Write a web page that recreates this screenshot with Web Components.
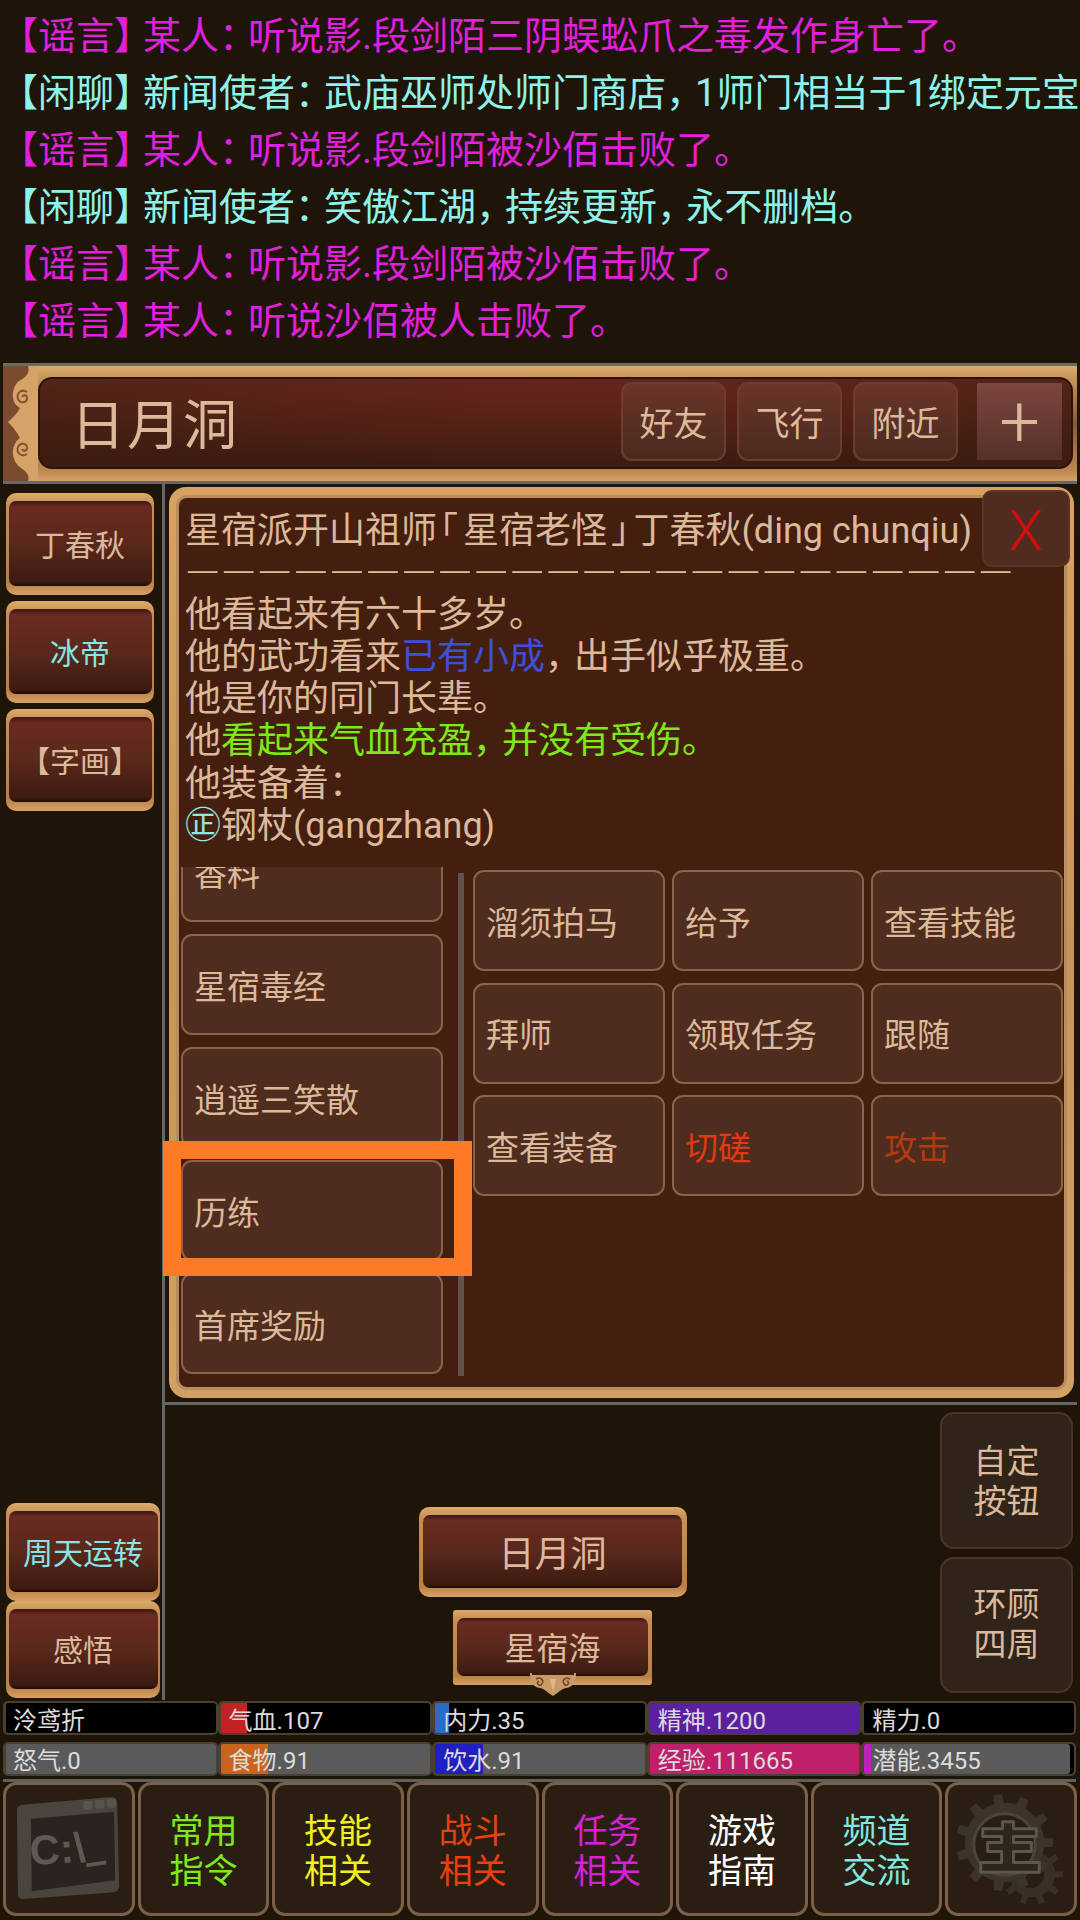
<!DOCTYPE html>
<html lang="zh">
<head>
<meta charset="utf-8">
<title>日月洞</title>
<style>
  html, body {margin: 0; padding: 0; background: #1e1408;}
  body {
    width: 1080px; height: 1920px; overflow: hidden; position: relative;
    font-family: Roboto, "Noto Sans CJK SC", sans-serif; color: #dcb99b;
  }
</style>
</head>
<body>
<game-app></game-app>

<script>
const BASE = ':host {box-sizing: border-box;} *, *::before, *::after {box-sizing: border-box;}'

// small helper: every element below is just css + markup in an open shadow root
function el(name, css, html) {
  customElements.define(name, class extends HTMLElement {
    connectedCallback() {
      if(this.shadowRoot) return
      const root = this.attachShadow({mode: 'open'})
      root.innerHTML = `<style>${BASE}${css}</style>${typeof html === 'function' ? html(this) : html}`
    }
  })
}

el('chat-line', `
  :host {display: block; height: 57px; line-height: 57px; font-size: 38px; white-space: nowrap;}
  :host([kind=rumor]) {color: #e11fdc;}
  :host([kind=idle]) {color: #8ff2ea;}
  ::slotted(.t) {letter-spacing: -9px;}
`, '<slot></slot>')

el('game-chat', `
  :host {display: block; height: 363px; padding-top: 7.5px; overflow: hidden;}
`, '<slot></slot>')

el('soft-button', `
  :host {
    display: flex; align-items: center; height: var(--h, 101px);
    padding-left: 11px; font-size: 33px; color: var(--c, #dcb99b);
    background: #4e2c1e; border: 2.5px solid #8a634c; border-radius: 11px;
  }
`, '<slot></slot>')

el('top-button', `
  :host {
    display: flex; align-items: center; justify-content: center;
    width: 105px; height: 79px; font-size: 34px; color: #dcb99b;
    background: linear-gradient(#6c342a, #4a2a1e); border: 2px solid #6c3c2c; border-radius: 11px;
  }
`, '<slot></slot>')

el('gold-button', `
  :host {
    display: flex; position: relative; flex: none;
    width: var(--w); height: var(--h);
    padding: 8px var(--side, 2.5px) 9px;
    border-radius: var(--r, 10px);
    background: linear-gradient(#dcab6b 0, #c68f54 12%, #b97f45 88%, #d7a265 100%);
    font-size: var(--fs, 30px); color: var(--c, #dcb99b);
  }
  .in {
    flex: 1; display: flex; align-items: center; justify-content: center; border-radius: 7px;
    padding-bottom: 2px;
    background: linear-gradient(#3a170e 0, #6a2a21 7%, #5a281c 50%, #3d1b11 95%, #1c0a05 100%);
  }
`, '<div class="in"><slot></slot></div>')

el('title-bar', `
  :host {
    display: flex; margin: 0 3px; height: 121px;
    border-top: 3px solid #6b6b60; border-bottom: 3px solid #686868;
    background: linear-gradient(#dcab6b 0, #c9955a 10%, #8a5a36 50%, #bb8550 90%, #d6a266 100%);
  }
  svg {flex: none; width: 35px; height: 115px; display: block;}
  .in {
    flex: 1; display: flex; align-items: center; margin: 11px 4px 12px 0; padding: 0 11px 4px 33px;
    border-radius: 14px; box-shadow: inset 0 0 0 2px #2b130a;
    background: radial-gradient(ellipse 60% 95% at 50% 0, rgba(112,36,28,.75), transparent), linear-gradient(#4f2418, #3c1b10);
  }
  .name {flex: 1; font-size: 54px; color: #dcb99b; letter-spacing: 2px;}
  .btns {display: flex; gap: 11px; margin-right: 19px;}
  .plus {
    display: flex; align-items: center; justify-content: center; width: 85px; height: 77px;
    font-size: 72px; font-weight: 300; color: #dcb99b; background: linear-gradient(#7c4640, #553128);
  }
`, `
  <svg viewBox="0 0 35 115">
    <rect width="35" height="115" fill="#7b4b2f"/>
    <path d="M35 0 H25 C27 6 24 10 18 14 C12 16 9 26 10 32 C11 38 14 40 17 42 C14 48 9 52 5 56 C9 60 14 66 17 72 C14 74 11 78 10 84 C9 90 12 98 18 102 C24 106 27 110 25 115 H35Z" fill="#d5a367"/>
    <path d="M24 26 C18 22 13 28 15 33 C17 38 24 37 24 32 C24 29 20 28 19 31 M24 88 C18 92 13 86 15 81 C17 76 24 77 24 82 C24 85 20 86 19 83" fill="none" stroke="#83522e" stroke-width="2"/>
  </svg>
  <div class="in">
    <div class="name"><slot name="name"></slot></div>
    <div class="btns"><slot name="btn"></slot></div>
    <div class="plus">+</div>
  </div>
`)

el('look-panel', `
  :host {
    display: flex; flex-direction: column; position: relative; height: 911px; margin: 3px 6px 4px 4px;
    padding: 11px 10px; border-radius: 17px;
    background: linear-gradient(#d9a262, #c8935a 50%, #d3a065);
  }
  .body {
    flex: 1; display: flex; flex-direction: column; border-radius: 8px; background: #441f10; min-height: 0;
    box-shadow: 0 0 0 3px #b98c5e;
  }
  .desc {
    height: 369px; padding: 12px 0 0 6px; overflow: hidden;
    font-size: 36px; white-space: nowrap; color: #dcb99b;
  }
  .close {
    position: absolute; top: 3px; right: 4px; width: 88px; height: 77px; padding-top: 5px;
    display: flex; align-items: center; justify-content: center;
    background: #4f2c1f; border: 2px solid #5a3526; border-radius: 10px;
    font-size: 56px; font-weight: 300; color: #d80c0c;
  }
  .acts {flex: 1; display: flex; min-height: 0;}
`, `
  <div class="body">
    <div class="desc"><slot name="desc"></slot></div>
    <div class="acts"><slot name="acts"></slot></div>
  </div>
  <div class="close">X</div>
`)

el('desc-line', `
  :host {display: block; height: 42.1px; line-height: 42.1px;}
  ::slotted(.t) {letter-spacing: -7px;}
  ::slotted(.b) {color: #3d50dc;}
  ::slotted(.g) {color: #7fe81a;}
  ::slotted(.o) {color: #8fe8e0;}
  ::slotted(.lb) {margin-left: 3px; letter-spacing: 5px;}
  ::slotted(.rb) {margin-left: 4px; letter-spacing: 4.5px;}
  ::slotted(.dash) {
    display: inline-block; letter-spacing: .7px; font-weight: 300;
    transform: scaleX(1.266); transform-origin: 0 50%;
  }
`, '<slot></slot>')

el('action-area', `
  :host {display: flex; flex: 1; height: 100%; min-width: 0;}
  .list {flex: none; width: 262px; margin-left: 2px; overflow: hidden;}
  .stack {display: flex; flex-direction: column; gap: 12px; margin-top: -46px;}
  .rule {flex: none; width: 6px; margin: 6px 9px 11px 15px; background: #66524c;}
  .grid {
    flex: 1; display: grid; grid-template-columns: repeat(3, 1fr); gap: 11.5px 7px;
    align-content: start; padding-top: 3px; margin-right: 1px; min-width: 0;
  }
`, `
  <div class="list"><div class="stack"><slot name="list"></slot></div></div>
  <div class="rule"></div>
  <div class="grid"><slot name="grid"></slot></div>
`)

el('side-column', `
  :host {display: flex; flex-direction: column; flex: none; width: 165px; padding: 9px 0 2px 6px; border-right: 3px solid #666;}
  .top {display: flex; flex-direction: column; gap: 6px;}
  .bottom {display: flex; flex-direction: column; margin-top: auto;}
`, `
  <div class="top"><slot name="top"></slot></div>
  <div class="bottom"><slot name="bottom"></slot></div>
`)

el('room-area', `
  :host {display: flex; height: 295px;}
  .map {flex: 1; display: flex; flex-direction: column; align-items: center; gap: 13px; padding-top: 102px;}
  .cmds {flex: none; width: 133px; margin-right: 7px; padding-top: 7px; display: flex; flex-direction: column; gap: 8px;}
`, `
  <div class="map"><slot name="map"></slot></div>
  <div class="cmds"><slot name="cmd"></slot></div>
`)

el('cmd-button', `
  :host {
    display: flex; align-items: center; justify-content: center; text-align: center;
    height: 136.5px; font-size: 33px; line-height: 40px; color: #dcb99b; padding-top: var(--pt, 0);
    background: #30241a; border: 2.5px solid #4c3422; border-radius: 14px;
  }
`, '<slot></slot>')

el('exit-knob', `
  :host {position: absolute; left: 50%; bottom: -11px; width: 46px; height: 23px; margin-left: -23px; display: block;}
  svg {display: block;}
`, `
  <svg width="46" height="23" viewBox="0 0 46 23">
    <path d="M0 0 H46 C46 8 44 14 36 15 C31 16 28 20 23 23 C18 20 15 16 10 15 C2 14 0 8 0 0Z" fill="#c99a68"/>
    <rect x="2" width="42" height="2" fill="#3a1c10"/>
    <path d="M6 6 c5 -3 9 2 5 6 c-3 1 -5 -3 -2 -4 M40 6 c-5 -3 -9 2 -5 6 c3 1 5 -3 2 -4" fill="none" stroke="#6e4526" stroke-width="1.6"/>
    <path d="M20 6 L23 19 L26 6" fill="#e2b880"/>
  </svg>
`)

el('stat-bar', `
  :host {
    display: flex; align-items: center; height: 34px; padding-left: var(--pad, 8px);
    font-size: 24px; color: #dcdcdc; white-space: nowrap;
    background-color: var(--bg, #000); background-repeat: no-repeat;
    background-image: linear-gradient(var(--fc, transparent), var(--fc, transparent));
    background-size: var(--fw, 0) 100%;
    border: 2px solid #4a3f30; border-width: 2px 2px 2px 3px; border-radius: 5px;
    box-shadow: inset var(--end, 0) 0 0 0 #000;
  }
`, '<slot></slot>')

el('stat-panel', `
  :host {
    display: grid; grid-template-columns: repeat(5, 1fr); gap: 6px 0;
    margin: 1px 4px 0 3px; padding-bottom: 3px; height: 81px;
    border-bottom: 3px solid #5f5f5f;
  }
`, '<slot></slot>')

el('nav-button', `
  :host {
    display: flex; align-items: center; justify-content: center; text-align: center;
    height: 134px; font-size: 34px; line-height: 39.5px; color: var(--c, #fff); padding-top: var(--pt, 5px);
    background: #2a1e12; border: 3px solid #7d5f48; border-radius: 13px; overflow: hidden;
  }
`, '<slot></slot>')

el('term-icon', `
  :host {display: block; width: 125px; height: 125px;}
  svg {display: block; filter: blur(.5px);}
  text {font-family: "Liberation Sans", sans-serif; font-weight: 700; font-size: 42px; fill: #5e5852;}
`, `
  <svg width="125" height="125" viewBox="2 2 126 126">
    <path d="M18 20 L108 12 Q114 12 114 18 L116 102 Q116 107 111 108 L20 115 Q14 115 14 110 L13 26 Q13 21 18 20Z" fill="#4a443e"/>
    <path d="M27 34 L111 27 L112 96 L28 107Z" fill="#2a2320"/>
    <rect x="80" y="16" width="9" height="9" rx="2" fill="#5a544e"/>
    <rect x="92" y="15" width="9" height="9" rx="2" fill="#5a544e"/>
    <rect x="104" y="14" width="9" height="9" rx="2" fill="#5a544e"/>
    <text x="27" y="81" transform="rotate(-4 27 81)">C:\\</text>
    <path d="M83 81 L103 78" stroke="#5e5852" stroke-width="4"/>
  </svg>
`)

function gearPath(cx, cy, r1, r2, n) {
  let d = ''
  for(let i = 0; i < n; i++) {
    const a = i / n * Math.PI * 2, s = Math.PI / n
    const pts = [[r1, a - s * .95], [r1, a - s * .45], [r2, a - s * .3], [r2, a + s * .3], [r1, a + s * .45]]
    pts.forEach(([r, t], k) => {
      d += `${i === 0 && k === 0 ? 'M' : 'L'}${(cx + r * Math.cos(t)).toFixed(1)} ${(cy + r * Math.sin(t)).toFixed(1)}`
    })
  }
  return d + 'Z'
}

el('gear-icon', `
  :host {display: block; width: 125px; height: 125px;}
  svg {display: block; filter: blur(.6px);}
`, () => `
  <svg width="125" height="125" viewBox="2 2 126 126">
    <path d="${gearPath(86, 90, 23, 31, 10)}" fill="#392f26"/>
    <circle cx="84" cy="90" r="14" fill="#2a1e12"/>
    <path d="${gearPath(58, 58, 40, 49, 11)}" fill="#3c332a"/>
    <circle cx="58" cy="60" r="31" fill="#2a1e12" stroke="#4c443b" stroke-width="3"/>
    <path d="M56 37 H67 V44 H90 V52 H67 V58 H85 V67 H67 V78 H93 V88 H34 V78 H55 V67 H41 V58 H55 V52 H36 V44 H56Z" fill="#2c2620" stroke="#5e574e" stroke-width="3" stroke-linejoin="round"/>
  </svg>
`)

el('nav-bar', `
  :host {display: grid; grid-template-columns: repeat(8, 1fr); gap: 3px; margin: 0 3px 0 3px;}
`, '<slot></slot>')

el('focus-ring', `
  :host {position: absolute; left: 163px; top: 1141px; width: 309px; height: 135px; border: 18px solid #ff7a26; display: block;}
`, '')

el('rule-line', `:host {display: block; height: 3px; margin-right: 3px; background: #666;}`, '')

el('main-row', `
  :host {display: flex; height: 1216px;}
  .right {flex: 1; min-width: 0; display: flex; flex-direction: column;}
`, `
  <slot name="side"></slot>
  <div class="right">
    <slot name="panel"></slot>
    <slot name="rule"></slot>
    <slot name="room"></slot>
  </div>
`)

el('game-app', `:host {display: block; width: 1080px; height: 1920px;}`, '<slot></slot>')

// the page itself, all content is passed in through slots
const chat = (kind, tag, rest) => `<chat-line kind="${kind}">【${tag}<span class="t">】</span>${rest}</chat-line>`
const soft = (slot, txt, c) => `<soft-button slot="${slot}"${c ? ` style="--c:${c}"` : ''}>${txt}</soft-button>`
const stat = (txt, style) => `<stat-bar style="${style || ''}">${txt}</stat-bar>`
const nav = (txt, c) => `<nav-button style="--c:${c}">${txt}</nav-button>`
const c = '<span class="t">：</span>', m = '<span class="t">，</span>'

document.querySelector('game-app').innerHTML = `
  <game-chat>
    ${chat('rumor', '谣言', `某人${c}听说影.段剑陌三阴蜈蚣爪之毒发作身亡了。`)}
    ${chat('idle', '闲聊', `新闻使者${c}武庙巫师处师门商店${m}1师门相当于1绑定元宝`)}
    ${chat('rumor', '谣言', `某人${c}听说影.段剑陌被沙佰击败了。`)}
    ${chat('idle', '闲聊', `新闻使者${c}笑傲江湖${m}持续更新${m}永不删档。`)}
    ${chat('rumor', '谣言', `某人${c}听说影.段剑陌被沙佰击败了。`)}
    ${chat('rumor', '谣言', `某人${c}听说沙佰被人击败了。`)}
  </game-chat>

  <title-bar>
    <span slot="name">日月洞</span>
    <top-button slot="btn">好友</top-button>
    <top-button slot="btn">飞行</top-button>
    <top-button slot="btn">附近</top-button>
  </title-bar>

  <main-row>
    <side-column slot="side">
      <gold-button slot="top" style="--w:148px;--h:102px">丁春秋</gold-button>
      <gold-button slot="top" style="--w:148px;--h:102px;--c:#86e6e6">冰帝</gold-button>
      <gold-button slot="top" style="--w:148px;--h:102px">【字画】</gold-button>
      <gold-button slot="bottom" style="--w:154px;--h:98px;--c:#86e6e6">周天运转</gold-button>
      <gold-button slot="bottom" style="--w:154px;--h:97px">感悟</gold-button>
    </side-column>
    <look-panel slot="panel">
      <desc-line slot="desc">星宿派开山祖师<span class="lb">｢</span>星宿老怪<span class="rb">｣</span>丁春秋(ding chunqiu)</desc-line>
      <desc-line slot="desc"><span class="dash">———————————————————————</span></desc-line>
      <desc-line slot="desc">他看起来有六十多岁。</desc-line>
      <desc-line slot="desc">他的武功看来<span class="b">已有小成</span><span class="t">，</span>出手似乎极重。</desc-line>
      <desc-line slot="desc">他是你的同门长辈。</desc-line>
      <desc-line slot="desc">他<span class="g">看起来气血充盈</span><span class="g t">，</span><span class="g">并没有受伤。</span></desc-line>
      <desc-line slot="desc">他装备着：</desc-line>
      <desc-line slot="desc"><span class="o">㊣</span>钢杖(gangzhang)</desc-line>
      <action-area slot="acts">
        ${soft('list', '香料')}${soft('list', '星宿毒经')}${soft('list', '逍遥三笑散')}${soft('list', '历练')}${soft('list', '首席奖励')}
        ${soft('grid', '溜须拍马')}${soft('grid', '给予')}${soft('grid', '查看技能')}
        ${soft('grid', '拜师')}${soft('grid', '领取任务')}${soft('grid', '跟随')}
        ${soft('grid', '查看装备')}${soft('grid', '切磋', '#e03a14')}${soft('grid', '攻击', '#b23c10')}
      </action-area>
    </look-panel>
    <rule-line slot="rule"></rule-line>
    <room-area slot="room">
      <gold-button slot="map" style="--w:268px;--h:90px;--fs:36px;--side:4.5px">日月洞</gold-button>
      <gold-button slot="map" style="--w:199px;--h:75px;--fs:32px;--side:4px;--r:3px">星宿海<exit-knob></exit-knob></gold-button>
      <cmd-button slot="cmd" style="--pt:3px">自定<br>按钮</cmd-button>
      <cmd-button slot="cmd">环顾<br>四周</cmd-button>
    </room-area>
  </main-row>

  <stat-panel>
    ${stat('泠鸢折', '--pad:7px')}${stat('气血.107', '--fc:#c42222;--fw:26px')}${stat('内力.35', '--fc:#2a6cc8;--fw:14px')}${stat('精神.1200', '--bg:#5b20a0')}${stat('精力.0')}
    ${stat('怒气.0', '--bg:#5a5a5a;--pad:7px')}${stat('食物.91', '--bg:#5a5a5a;--fc:#c8641e;--fw:47px')}${stat('饮水.91', '--bg:#5a5a5a;--fc:#2020c0;--fw:48px')}${stat('经验.111665', '--bg:#c0206a')}${stat('潜能.3455', '--bg:#5a5a5a;--fc:#c020c0;--fw:7px;--end:-4px')}
  </stat-panel>

  <nav-bar>
    <nav-button style="--pt:0"><term-icon></term-icon></nav-button>
    ${nav('常用<br>指令', '#7fe81a')}${nav('技能<br>相关', '#f0f020')}${nav('战斗<br>相关', '#e84010')}
    ${nav('任务<br>相关', '#d820d8')}${nav('游戏<br>指南', '#ffffff')}${nav('频道<br>交流', '#80e8e0')}
    <nav-button style="--pt:0"><gear-icon></gear-icon></nav-button>
  </nav-bar>

  <focus-ring></focus-ring>
`
</script>
</body>
</html>
